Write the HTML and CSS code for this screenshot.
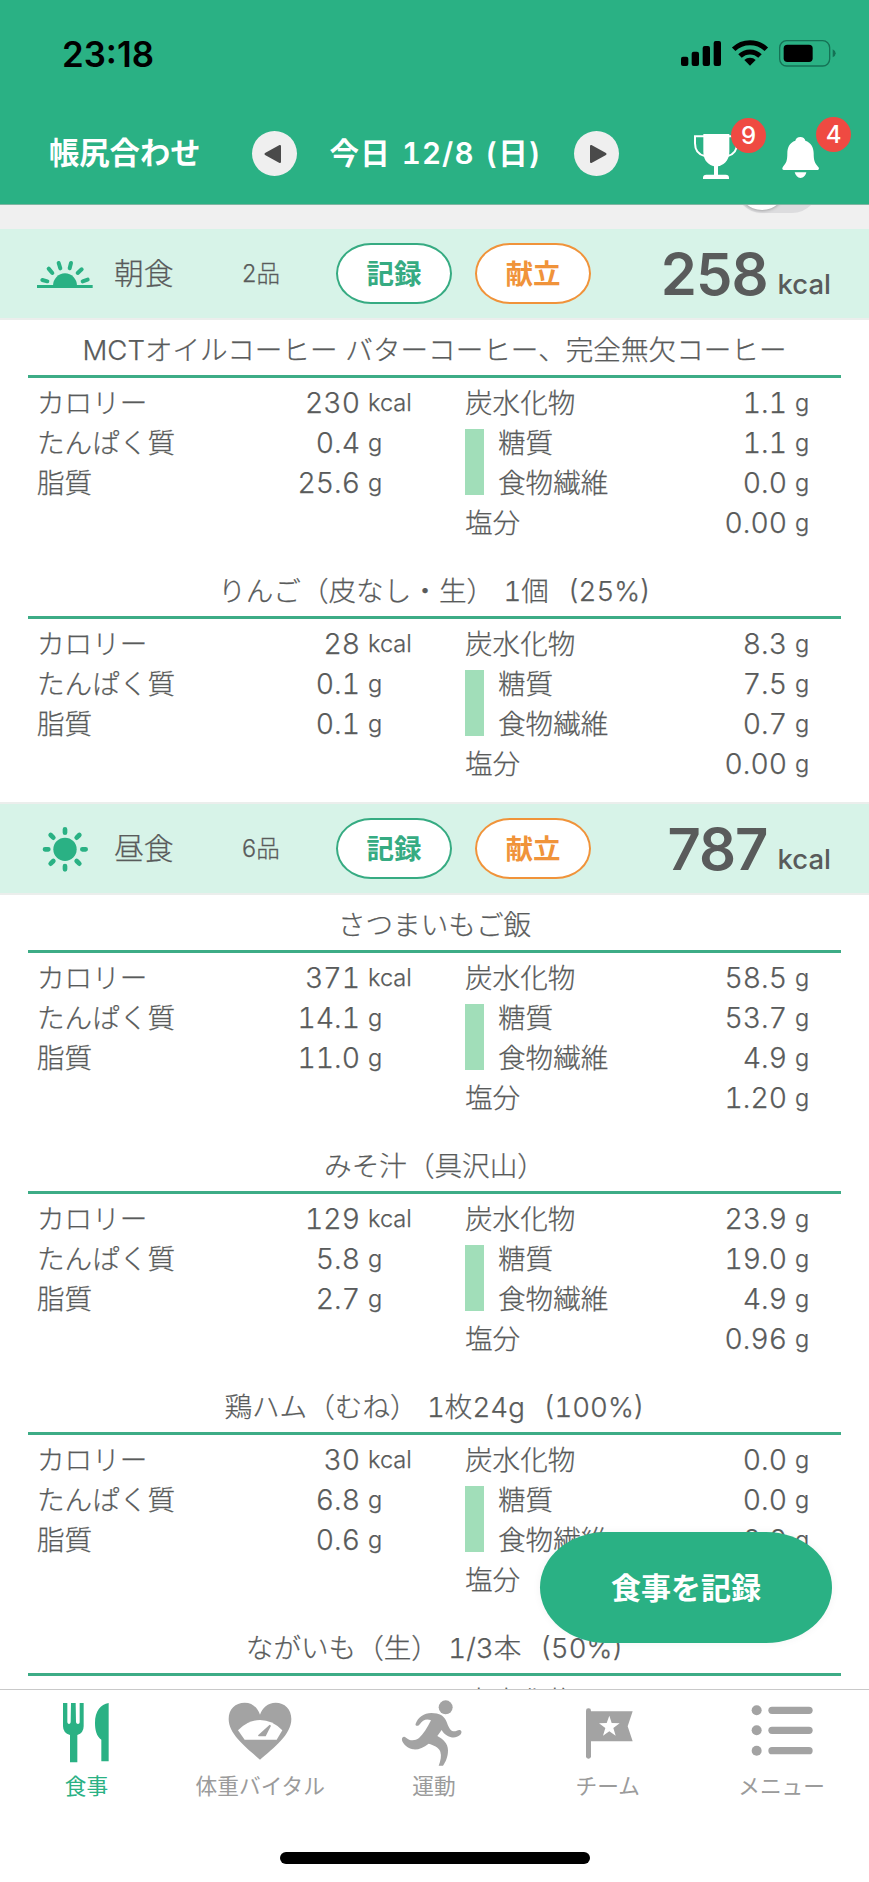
FILE: index.html
```html
<!DOCTYPE html>
<html lang="ja">
<head>
<meta charset="utf-8">
<title>食事</title>
<link rel="stylesheet" href="styles.css">
</head>
<body>
<div class="screen">
  <header class="header">
    <div class="status">
      <span class="clock">23:18</span>
      <svg class="status-icons" viewBox="750 117 471 84" width="157" height="28">
        <rect x="753" y="170" width="22" height="28" rx="6"/><rect x="785" y="155" width="22" height="43" rx="6"/><rect x="818" y="138" width="22" height="60" rx="6"/><rect x="851" y="123" width="22" height="75" rx="6"/>
        <path class="wave" d="M911 148A70 70 0 0 1 1009 148"/><path class="wave" d="M930 168A43 43 0 0 1 990 168"/><path d="M960 197L943 180A25 25 0 0 1 977 180Z"/>
        <rect class="battery" x="1049" y="122" width="150" height="76" rx="21"/><rect x="1061" y="134" width="87" height="52" rx="11"/><path class="nub" d="M1208 148Q1217 152 1217 160T1208 172Z"/>
      </svg>
    </div>
    <nav class="navbar">
      <span class="adjust">帳尻合わせ</span>
      <button class="arrow prev"><svg viewBox="0 0 45 45" width="45" height="45"><path d="M28 15V31L13.500 23Z"/></svg></button>
      <span class="date">今日 12/8 (日)</span>
      <button class="arrow next"><svg viewBox="0 0 45 45" width="45" height="45"><path d="M17 15V31L31.500 23Z"/></svg></button>
      <div class="notice trophy">
        <svg viewBox="786 396 144 147" width="48" height="49"><path d="M820 402H898V455C898 485 877 496 864 499V524H887Q897 524 897 533V537H819V533Q819 524 829 524H852V499C839 495 820 485 820 455Z"/><path class="handle" d="M822 409H795V430C795 450 805 464 824 468M896 409H921V430C921 452 912 464 893 468"/></svg>
        <span class="badge">9</span>
      </div>
      <div class="notice bell">
        <svg viewBox="1050 405 123 135" width="41" height="45"><path d="M1111 411C1103 411 1097 416 1096 422C1079 428 1072 442 1072 460C1072 482 1069 490 1059 500C1055 505 1057 510 1062 510H1161C1167 510 1169 505 1164 500C1154 489 1151 482 1151 460C1151 442 1143 428 1126 422C1125 416 1119 411 1111 411ZM1094 517H1129C1127 527 1120 534 1111.500 534S1097 527 1094 517Z"/></svg>
        <span class="badge">4</span>
      </div>
    </nav>
  </header>

  <main class="content">
    <div class="strip"><span class="switch"></span></div>

    <section class="meal">
      <div class="meal-head">
        <svg class="meal-icon" viewBox="105 765 180 96" width="60" height="32"><rect x="111" y="846" width="167" height="9"/><path d="M159 848A36 37 0 0 1 231 848Z"/><path class="ray" d="M127 831L142 835M146 797L157 810M176 780L181 796M213 780L209 796M245 799L233 810M263 830L248 835"/></svg>
        <h2 class="meal-name">朝食</h2><span class="count">2品</span>
        <button class="pill record">記録</button><button class="pill plan">献立</button>
        <p class="total"><span class="total-num">258</span><span class="total-unit">kcal</span></p>
      </div>
      <article class="item">
        <h3 class="title">MCTオイルコーヒー バターコーヒー、完全無欠コーヒー</h3>
        <div class="facts">
          <dl class="left"><dt>カロリー</dt><dd>230</dd><dd class="unit">kcal</dd><dt>たんぱく質</dt><dd>0.4</dd><dd class="unit">g</dd><dt>脂質</dt><dd>25.6</dd><dd class="unit">g</dd></dl>
          <dl class="right"><dt>炭水化物</dt><dd>1.1</dd><dd class="unit">g</dd><dt class="sub">糖質</dt><dd>1.1</dd><dd class="unit">g</dd><dt class="sub">食物繊維</dt><dd>0.0</dd><dd class="unit">g</dd><dt>塩分</dt><dd>0.00</dd><dd class="unit">g</dd></dl>
        </div>
      </article>
      <article class="item">
        <h3 class="title">りんご（皮なし・生）<span class="amount"> 1個 &nbsp;(25%)</span></h3>
        <div class="facts">
          <dl class="left"><dt>カロリー</dt><dd>28</dd><dd class="unit">kcal</dd><dt>たんぱく質</dt><dd>0.1</dd><dd class="unit">g</dd><dt>脂質</dt><dd>0.1</dd><dd class="unit">g</dd></dl>
          <dl class="right"><dt>炭水化物</dt><dd>8.3</dd><dd class="unit">g</dd><dt class="sub">糖質</dt><dd>7.5</dd><dd class="unit">g</dd><dt class="sub">食物繊維</dt><dd>0.7</dd><dd class="unit">g</dd><dt>塩分</dt><dd>0.00</dd><dd class="unit">g</dd></dl>
        </div>
      </article>
    </section>

    <section class="meal">
      <div class="meal-head">
        <svg class="meal-icon" viewBox="104 129 180 150" width="60" height="50"><circle cx="194" cy="205" r="35"/><path class="ray sun" d="M194 145V155M194 255V265M134 205H144M246 205H256M151 162L159 170M229 240L237 248M151 248L159 240M229 170L237 162"/></svg>
        <h2 class="meal-name">昼食</h2><span class="count">6品</span>
        <button class="pill record">記録</button><button class="pill plan">献立</button>
        <p class="total"><span class="total-num">787</span><span class="total-unit">kcal</span></p>
      </div>
      <article class="item">
        <h3 class="title">さつまいもご飯</h3>
        <div class="facts">
          <dl class="left"><dt>カロリー</dt><dd>371</dd><dd class="unit">kcal</dd><dt>たんぱく質</dt><dd>14.1</dd><dd class="unit">g</dd><dt>脂質</dt><dd>11.0</dd><dd class="unit">g</dd></dl>
          <dl class="right"><dt>炭水化物</dt><dd>58.5</dd><dd class="unit">g</dd><dt class="sub">糖質</dt><dd>53.7</dd><dd class="unit">g</dd><dt class="sub">食物繊維</dt><dd>4.9</dd><dd class="unit">g</dd><dt>塩分</dt><dd>1.20</dd><dd class="unit">g</dd></dl>
        </div>
      </article>
      <article class="item">
        <h3 class="title">みそ汁（具沢山）</h3>
        <div class="facts">
          <dl class="left"><dt>カロリー</dt><dd>129</dd><dd class="unit">kcal</dd><dt>たんぱく質</dt><dd>5.8</dd><dd class="unit">g</dd><dt>脂質</dt><dd>2.7</dd><dd class="unit">g</dd></dl>
          <dl class="right"><dt>炭水化物</dt><dd>23.9</dd><dd class="unit">g</dd><dt class="sub">糖質</dt><dd>19.0</dd><dd class="unit">g</dd><dt class="sub">食物繊維</dt><dd>4.9</dd><dd class="unit">g</dd><dt>塩分</dt><dd>0.96</dd><dd class="unit">g</dd></dl>
        </div>
      </article>
      <article class="item">
        <h3 class="title">鶏ハム（むね）<span class="amount"> 1枚24g &nbsp;(100%)</span></h3>
        <div class="facts">
          <dl class="left"><dt>カロリー</dt><dd>30</dd><dd class="unit">kcal</dd><dt>たんぱく質</dt><dd>6.8</dd><dd class="unit">g</dd><dt>脂質</dt><dd>0.6</dd><dd class="unit">g</dd></dl>
          <dl class="right"><dt>炭水化物</dt><dd>0.0</dd><dd class="unit">g</dd><dt class="sub">糖質</dt><dd>0.0</dd><dd class="unit">g</dd><dt class="sub">食物繊維</dt><dd>0.0</dd><dd class="unit">g</dd><dt>塩分</dt></dl>
        </div>
      </article>
      <article class="item">
        <h3 class="title">ながいも（生）<span class="amount"> 1/3本 &nbsp;(50%)</span></h3>
        <div class="facts">
          <dl class="left"><dt>カロリー</dt></dl>
          <dl class="right"><dt>炭水化物</dt></dl>
        </div>
      </article>
    </section>
  </main>

  <button class="fab">食事を記録</button>

  <footer class="tabbar">
    <div class="tabs">
      <a class="tab active"><svg viewBox="157 775 210 210" width="70" height="70"><path d="M190 790H203V848Q204 853 208 853T213 848L214 790H228L229 848Q230 853 235 853T240 848V790H252V860Q252 880 233 886V968H211V886Q190 880 190 860ZM327 790V965H305V900C290 890 286 870 286 850C286 815 303 793 327 790Z"/></svg><span>食事</span></a>
      <a class="tab"><svg viewBox="677 775 210 210" width="70" height="70"><path d="M779 960C740 925 685 885 685 838C685 808 705 789 733 789C757 789 772 805 779 825C786 805 802 789 826 789C853 789 873 808 873 838C873 885 820 925 779 960Z"/><path class="cut" d="M713 872Q742 841 779 841T846 872L829 900H733Z"/><path d="M808 855L812 858L796 890H775Q772 889 774 886Z"/></svg><span>体重バイタル</span></a>
      <a class="tab"><svg viewBox="28 25 210 210" width="70" height="70"><circle cx="168" cy="53" r="21"/><path d="M78 102C85 83 103 70 125 70C150 70 163 78 170 95C176 110 181 124 191 125C199 126 205 119 211 121C218 124 216 132 211 136C200 146 185 145 173 138C165 134 160 128 156 121L143 139C160 149 175 160 175 182C175 202 168 217 160 228H147C153 212 156 198 152 186C147 172 131 166 117 162C100 175 85 181 70 179C53 176 40 163 37 152C35 143 43 138 49 144C60 154 76 154 88 145C102 133 112 115 124 92C110 86 98 92 91 103C85 112 75 109 78 102Z"/></svg><span>運動</span></a>
      <a class="tab"><svg viewBox="429 775 210 210" width="70" height="70"><rect x="468" y="806" width="15" height="151" rx="7"/><path d="M480 815H608L593 860L608 905H480Z"/><path class="cut" d="M538 828L545 850L569 851L550 865L557 888L538 875L519 888L526 865L507 851L530 850Z"/></svg><span>チーム</span></a>
      <a class="tab"><svg viewBox="952 775 210 210" width="70" height="70"><circle cx="981" cy="812" r="15"/><circle cx="981" cy="872" r="15"/><circle cx="981" cy="933" r="15"/><rect x="1016" y="801" width="133" height="22" rx="11"/><rect x="1016" y="861" width="133" height="22" rx="11"/><rect x="1016" y="922" width="133" height="22" rx="11"/></svg><span>メニュー</span></a>
    </div>
    <div class="home-bar"></div>
  </footer>
</div>
</body>
</html>
```
FILE: styles.css
```css
* { box-sizing: border-box; margin: 0; padding: 0; }
body { background: #fff; }
button { border: 0; background: none; font: inherit; color: inherit; }
svg { display: block; flex: none; }

.screen {
  position: relative;
  display: flex;
  flex-direction: column;
  width: 869px;
  height: 1882px;
  overflow: hidden;
  font-family: "Inter", "Noto Sans CJK JP", sans-serif;
  color: #595b5b;
}

/* header */
.header { height: 205px; background: #2ab184; border-bottom: 1px solid #7fb5a2; flex: none; }
.status { display: flex; justify-content: space-between; padding: 34px 32px 0 62px; height: 102px; }
.clock { font-size: 34.800px; line-height: 40px; font-weight: 600; color: #000; }
.status-icons { margin-top: 5px; }
.wave { fill: none; stroke: #000; stroke-width: 15; }
.battery { fill: none; stroke: #157255; stroke-width: 4; }
.nub { fill: #157255; }
.navbar { display: flex; align-items: center; height: 102px; padding-left: 48px; color: #fff; font-size: 30.300px; font-weight: 600; white-space: nowrap; }
.adjust { width: 204px; padding: 0 0 4px 1px; }
.arrow { width: 45px; height: 45px; border-radius: 50%; background: #efefef; }
.arrow path { fill: #4a4a4a; stroke: #4a4a4a; stroke-width: 2; stroke-linejoin: round; }
.date { width: 277px; padding-bottom: 4px; text-align: center; font-size: 29.500px; letter-spacing: 1.100px; word-spacing: 2px; font-variant-numeric: tabular-nums; }
.notice { position: relative; }
.notice svg { fill: #fff; }
.trophy { margin: 7px 0 0 73px; }
.bell { margin: 8px 0 0 40px; }
.handle { fill: none; stroke: #fff; stroke-width: 6; }
.badge { position: absolute; width: 35px; height: 35px; border-radius: 50%; background: #ef4a42; font: 500 24px/36px "Inter", sans-serif; text-align: center; }
.trophy .badge { left: 39px; top: -14px; }
.bell .badge { left: 36px; top: -18px; }

/* scrolling list */
.content { flex: 1; min-height: 0; overflow: hidden; }
.strip { position: relative; height: 24px; background: #f0f0f0; overflow: hidden; }
.switch { position: absolute; left: 735px; top: -46px; width: 84px; height: 54px; border-radius: 27px; background: #dcdcde; }
.switch::after { content: ""; position: absolute; left: 3px; top: 3px; width: 48px; height: 48px; border-radius: 50%; background: #fff; box-shadow: 0 1px 3px rgba(0, 0, 0, .25); }
.meal-head { display: flex; align-items: center; height: 93px; padding-left: 35px; background: #d7f3e8; border: solid #ebeeec; border-width: 2px 0; }
.meal:first-of-type .meal-head { height: 91px; border-top: 0; }
.ray { fill: none; stroke: #2ab184; stroke-width: 12; stroke-linecap: round; }
.sun { stroke-width: 14; }
.meal-icon { fill: #2ab184; }
.meal-name { width: 128px; margin-left: 19px; padding-bottom: 2px; font-size: 29.800px; font-weight: 300; line-height: 40px; -webkit-text-stroke: .25px; }
.count { width: 94px; padding-bottom: 4px; font-size: 23.500px; font-weight: 300; -webkit-text-stroke: .25px; }
.pill { width: 116px; height: 61px; border: 2px solid; border-radius: 35px / 30.500px; background: #fff; font-size: 27.500px; line-height: 54px; font-weight: 700; }
.record { color: #36ab82; margin-right: 23px; }
.plan { color: #f0933a; }
.total { display: flex; flex: 1; justify-content: flex-end; align-items: baseline; padding-right: 38px; }
.total-num { font-size: 58px; font-weight: 600; letter-spacing: -1px; line-height: 68px; }
.total-unit { margin-left: 10px; font-size: 27.500px; font-weight: 500; position: relative; top: -1px; }

.item { height: 241px; padding: 0 28px; font-weight: 300; font-size: 27.600px; white-space: nowrap; -webkit-text-stroke: .25px; }
.title { height: 58px; padding-top: 10px; line-height: 40px; font-size: 27.600px; font-weight: 300; text-align: center; border-bottom: 3px solid #3dac86; }
.amount { word-spacing: 2px; font-variant-numeric: tabular-nums; }
.facts { display: flex; justify-content: space-between; padding: 5px 31px 0 9px; }
dl { display: grid; grid-auto-rows: 40px; line-height: 41px; align-content: start; }
.left { grid-template-columns: 170px 153px 60px; }
.right { grid-template-columns: 140px 182px 23px; position: relative; }
.right::before { content: ""; position: absolute; left: 0; top: 46px; width: 19px; height: 66px; background: #a1deb9; }
dd { text-align: right; font-size: 28.300px; font-variant-numeric: tabular-nums; }
.unit { padding-left: 8px; font-size: 23.600px; line-height: 39px; text-align: left; }
.sub { padding-left: 33px; }

/* floating action */
.fab { position: absolute; left: 540px; top: 1532px; width: 292px; height: 111px; border-radius: 66px / 55.500px; background: #2ab184; color: #fff; font-size: 30px; line-height: 110px; font-weight: 700; box-shadow: 0 0 8px rgba(0, 0, 0, .05); }

/* tab bar */
.tabbar { flex: none; height: 193px; background: #fff; border-top: 1px solid #c9c9c9; }
.tabs { display: flex; padding-top: 8px; height: 162px; }
.tab { flex: 1; display: flex; flex-direction: column; align-items: center; font-size: 21.700px; line-height: 36px; color: #9b9b9b; fill: #a3a3a3; }
.tab span { margin-right: 1px; }
.active { color: #2ab184; fill: #2ab184; }
.cut { fill: #fff; }
.home-bar { width: 310px; height: 12px; margin-left: 280px; border-radius: 6px; background: #000; }
```
